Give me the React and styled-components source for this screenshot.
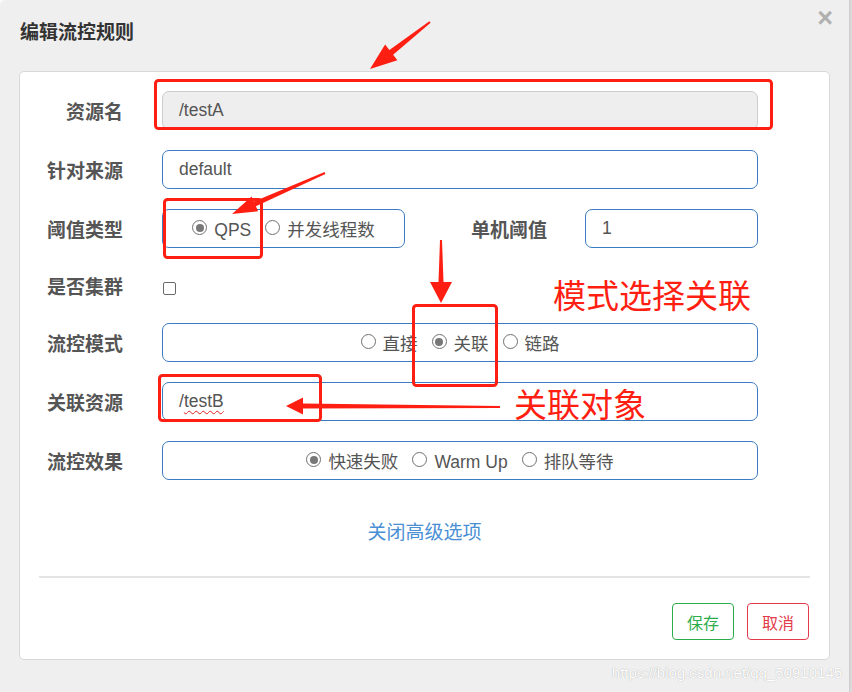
import React from 'react';
import styled, { createGlobalStyle } from 'styled-components';

const GlobalStyle = createGlobalStyle`
  html, body {
    margin: 0;
    padding: 0;
    background: #fafafa;
  }
  body {
    font-family: "Liberation Sans", "Noto Sans CJK SC", sans-serif;
  }
`;

const RED = '#ff1f12';

// tapered hand-drawn arrow, tail -> tip
const arrowPoints = (x1, y1, x2, y2, tw, sw, hl, hw) => {
  const dx = x2 - x1;
  const dy = y2 - y1;
  const len = Math.hypot(dx, dy);
  const ux = dx / len;
  const uy = dy / len;
  const px = -uy;
  const py = ux;
  const bx = x2 - ux * hl;
  const by = y2 - uy * hl;
  const pts = [
    [x1 + (px * tw) / 2, y1 + (py * tw) / 2],
    [bx + (px * sw) / 2, by + (py * sw) / 2],
    [bx + (px * hw) / 2, by + (py * hw) / 2],
    [x2, y2],
    [bx - (px * hw) / 2, by - (py * hw) / 2],
    [bx - (px * sw) / 2, by - (py * sw) / 2],
    [x1 - (px * tw) / 2, y1 - (py * tw) / 2],
  ];
  return pts.map((p) => p.map((v) => v.toFixed(1)).join(',')).join(' ');
};

const App = () => {
  return (
    <>
      <GlobalStyle />
      <Page>
        <Modal>
          <Header>
            <Title>编辑流控规则</Title>
            <Close>×</Close>
          </Header>
          <Card>
            <Form>
              <Label>资源名</Label>
              <Field disabled>/testA</Field>

              <Label>针对来源</Label>
              <Field>default</Field>

              <Label>阈值类型</Label>
              <SplitRow>
                <RadioBox>
                  <Radio checked>QPS</Radio>
                  <Radio>并发线程数</Radio>
                </RadioBox>
                <Label>单机阈值</Label>
                <Field>1</Field>
              </SplitRow>

              <Label>是否集群</Label>
              <CheckRow>
                <Checkbox />
              </CheckRow>

              <Label>流控模式</Label>
              <RadioBox>
                <Radio>直接</Radio>
                <Radio checked>关联</Radio>
                <Radio>链路</Radio>
              </RadioBox>

              <Label>关联资源</Label>
              <Field>
                /<Squiggle>testB</Squiggle>
              </Field>

              <Label>流控效果</Label>
              <RadioBox>
                <Radio checked>快速失败</Radio>
                <Radio>Warm Up</Radio>
                <Radio>排队等待</Radio>
              </RadioBox>
            </Form>

            <ToggleLink>关闭高级选项</ToggleLink>
            <Divider />

            <Footer>
              <Button tone="#2eac4c">保存</Button>
              <Button tone="#e23b4c">取消</Button>
            </Footer>
          </Card>
        </Modal>
        <Strip />

        <Overlay width="852" height="692" viewBox="0 0 852 692">
          <rect x="155.5" y="80.5" width="616" height="48" rx="3" />
          <rect x="164.5" y="199.5" width="97" height="58" rx="3" />
          <rect x="413.5" y="305.5" width="83" height="80" rx="3" />
          <rect x="159.5" y="375.5" width="161" height="45" rx="3" />
          <polygon points={arrowPoints(430, 22, 370, 69, 2, 6, 27, 20)} />
          <polygon points={arrowPoints(325, 173, 232, 214, 2, 5, 25, 16)} />
          <polygon points={arrowPoints(441, 240, 441, 303, 2, 5, 21, 22)} />
          <polygon points={arrowPoints(500, 407, 286, 406, 2, 5, 17, 17)} />
        </Overlay>
        <Note top={276} left={553}>模式选择关联</Note>
        <Note top={385} left={514}>关联对象</Note>
        <Watermark>https://blog.csdn.net/qq_50910145</Watermark>
      </Page>
    </>
  );
};

const Radio = ({ checked, children }) => (
  <RadioItem>
    <RadioDot checked={checked} />
    <RadioText>{children}</RadioText>
  </RadioItem>
);

const Page = styled.div`
  position: relative;
  width: 852px;
  height: 692px;
  overflow: hidden;
  display: flex;
`;

const Modal = styled.div`
  width: 849px;
  height: 100%;
  background: #efefef;
  border-radius: 6px 0 0 0;
  display: flex;
  flex-direction: column;
`;

const Strip = styled.div`
  flex: 1;
  background: #d9d9d9;
  border-left: 1px solid #cfcfcf;
`;

const Header = styled.div`
  height: 71px;
  flex-shrink: 0;
  box-sizing: border-box;
  padding: 0 16px 0 20px;
  display: flex;
  justify-content: space-between;
`;

const Title = styled.h4`
  margin: 19px 0 0;
  font-family: "Noto Sans CJK SC", sans-serif;
  font-size: 19px;
  line-height: 24px;
  font-weight: 700;
  color: #333;
`;

const Close = styled.span`
  margin-top: 3px;
  font-family: "Liberation Sans", sans-serif;
  font-size: 27px;
  line-height: 30px;
  font-weight: 700;
  color: #b0b0b0;
`;

const Card = styled.div`
  margin: 0 19px;
  height: 589px;
  flex-shrink: 0;
  box-sizing: border-box;
  padding: 19px;
  background: #fff;
  border: 1px solid #d8d8d8;
  border-radius: 5px;
  display: flex;
  flex-direction: column;
`;

const Form = styled.div`
  display: grid;
  grid-template-columns: 84px 1fr;
  grid-template-rows: 39px 39px 39px 35px 39px 39px 39px;
  column-gap: 39px;
  row-gap: 20px;
  padding-right: 52px;
  flex-shrink: 0;
`;

const Label = styled.div`
  display: flex;
  align-items: center;
  justify-content: flex-end;
  font-family: "Noto Sans CJK SC", sans-serif;
  font-size: 19px;
  font-weight: 700;
  color: #555;
  white-space: nowrap;
`;

const Field = styled.div`
  display: flex;
  align-items: center;
  box-sizing: border-box;
  height: 39px;
  padding: 0 16px;
  border: 1px solid ${(p) => (p.disabled ? '#cccccc' : '#3b7bbf')};
  border-radius: 7px;
  background: ${(p) => (p.disabled ? '#eeeeee' : '#fff')};
  font-size: 17.5px;
  color: #555;
`;

const Squiggle = styled.span`
  text-decoration: underline wavy #e02020;
  text-decoration-thickness: 1px;
  text-underline-offset: 3px;
`;

const SplitRow = styled.div`
  display: grid;
  grid-template-columns: 243px 1fr 173px;
  column-gap: 38px;
`;

const RadioBox = styled.div`
  display: flex;
  align-items: center;
  justify-content: center;
  gap: 14px;
  box-sizing: border-box;
  height: 39px;
  border: 1px solid #3b7bbf;
  border-radius: 7px;
`;

const RadioItem = styled.label`
  display: flex;
  align-items: center;
  gap: 7px;
`;

const RadioDot = styled.span`
  position: relative;
  width: 15px;
  height: 15px;
  box-sizing: border-box;
  border-radius: 50%;
  border: 1px solid #707070;
  background: #fff;
  margin-top: -2px;

  &::after {
    content: '';
    display: ${(p) => (p.checked ? 'block' : 'none')};
    position: absolute;
    inset: 2.5px;
    border-radius: 50%;
    background: #777;
  }
`;

const RadioText = styled.span`
  font-size: 17.5px;
  color: #555;
  line-height: 24px;
  padding-top: 3px;
`;

const CheckRow = styled.div`
  display: flex;
  align-items: center;
  padding: 5px 0 0 1px;
`;

const Checkbox = styled.span`
  width: 13px;
  height: 13px;
  box-sizing: border-box;
  border: 1px solid #6a6a6a;
  border-radius: 2px;
  background: #fff;
`;

const ToggleLink = styled.a`
  align-self: center;
  margin-top: 38px;
  font-family: "Noto Sans CJK SC", sans-serif;
  font-size: 19px;
  line-height: 26px;
  color: #4a8fd4;
  cursor: pointer;
`;

const Divider = styled.hr`
  flex-shrink: 0;
  margin: 32px 0 0;
  border: 0;
  height: 2px;
  background: #e4e4e4;
`;

const Footer = styled.div`
  display: flex;
  justify-content: flex-end;
  gap: 13px;
  margin-top: 25px;
  padding-right: 1px;
`;

const Button = styled.button`
  width: 62px;
  height: 37px;
  padding: 0;
  border: 1px solid ${(p) => p.tone};
  border-radius: 4px;
  background: #fff;
  color: ${(p) => p.tone};
  font-family: "Noto Sans CJK SC", sans-serif;
  font-size: 16px;
`;

const Overlay = styled.svg`
  position: absolute;
  left: 0;
  top: 0;
  pointer-events: none;

  rect {
    fill: none;
    stroke: ${RED};
    stroke-width: 3;
  }
  polygon {
    fill: ${RED};
  }
`;

const Note = styled.span`
  position: absolute;
  top: ${(p) => p.top}px;
  left: ${(p) => p.left}px;
  font-family: "Noto Sans CJK SC", sans-serif;
  font-size: 33px;
  line-height: 36px;
  color: ${RED};
  white-space: nowrap;
`;

const Watermark = styled.span`
  position: absolute;
  right: 10px;
  top: 664px;
  font-family: "Liberation Sans", sans-serif;
  font-size: 15px;
  line-height: 18px;
  color: #ffffff;
  text-shadow: 0 0 1px rgba(0, 0, 0, 0.35);
`;

export default App;
